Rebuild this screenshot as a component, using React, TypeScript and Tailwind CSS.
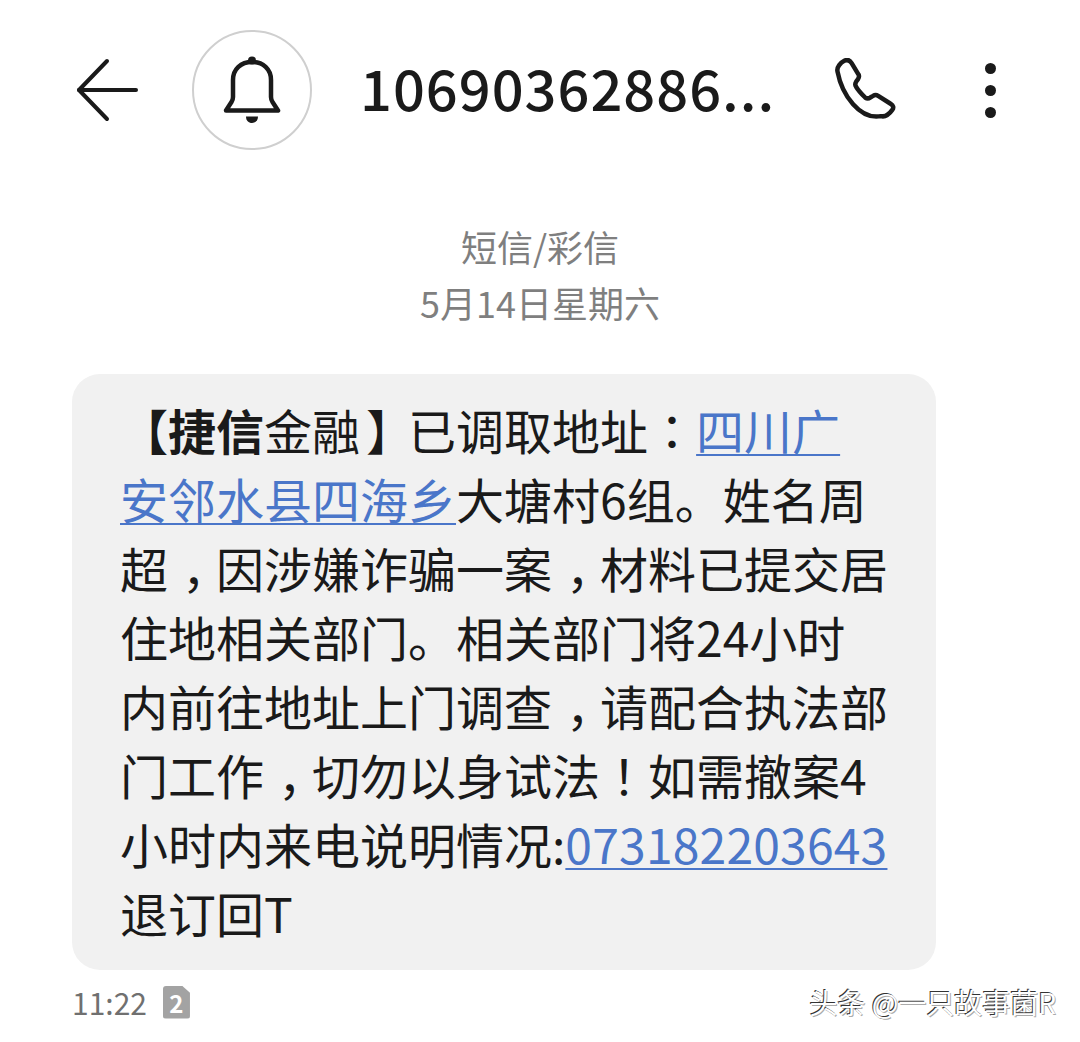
const cjk = "font-['Noto_Sans_CJK_SC','Noto_Sans',sans-serif]";

function BackIcon() {
  return (
    <svg width="64" height="64" viewBox="0 0 64 64" fill="none" stroke="#1a1a1a" strokeWidth="4" strokeLinecap="round" strokeLinejoin="round">
      <path d="M60 32H3" />
      <path d="M31 3 3 32l28 29" />
    </svg>
  );
}

function BellIcon() {
  return (
    <svg width="60" height="68" viewBox="0 0 60 68" fill="none" stroke="#1a1a1a" strokeWidth="4.5" strokeLinejoin="round">
      <path d="M4 54.5 9.5 46c1-1.5 1.5-3 1.5-5V24C11 13 19 6 30 6s19 7 19 18v17c0 2 .5 3.5 1.500 5L56 54.500Z" />
      <circle cx="30" cy="4.500" r="4" fill="#1a1a1a" stroke="none" />
      <path d="M24 60.500h12c0 4-2.500 6.500-6 6.500s-6-2.500-6-6.500Z" fill="#1a1a1a" stroke="none" />
    </svg>
  );
}

function PhoneIcon() {
  return (
    <svg width="70" height="70" viewBox="0 0 62 62" fill="none" stroke="#1a1a1a" strokeWidth="4" strokeLinejoin="round">
      <path d="M4 12c-1-4 3-8 6-9.500 3-1.500 5-.5 6.500 2l6 10c1 1.500.5 3-.5 4.500l-1.500 2c-1 1.500-1 3 0 4.500 2 3.500 4.500 6 8 9.500 1.500 1 3 1 4.500 0l2.500-1.500c1.500-1 3-1 4.500 0l11 7c2.500 1.500 3 3.500 1.500 5.500-2.500 3.500-6 6.500-10 5.500C24 55 8 33 4 12Z" />
    </svg>
  );
}

function Line({ children }: { children: React.ReactNode }) {
  return <div className="h-[69px] leading-[69px] whitespace-nowrap">{children}</div>;
}

function Link({ children }: { children: React.ReactNode }) {
  return <span className="text-[#4a76c9] underline underline-offset-[4px] decoration-2">{children}</span>;
}

// centred full-width punctuation, as on the phone
function P({ children }: { children: React.ReactNode }) {
  return <span className="font-['Noto_Sans_CJK_TC',sans-serif]">{children}</span>;
}

// comma that sits on the baseline but in the middle of its cell
function Comma() {
  return <span className="inline-block pl-[14px] tracking-[-14px]">，</span>;
}

export default function App() {
  return (
    <div className={`w-[1080px] h-[1042px] bg-white overflow-hidden ${cjk}`}>
      {/* Header */}
      <div className="flex items-center h-[120px] mt-[30px] pl-[76px]">
        <BackIcon />
        <div className="ml-[52px] w-[120px] h-[120px] rounded-full border-2 border-[#cfcfcf] flex items-center justify-center">
          <BellIcon />
        </div>
        <div className="ml-[48px] w-[420px] -mt-[6px] text-[56px] font-medium text-[#1a1a1a] tracking-[1px] whitespace-nowrap">
          10690362886...
        </div>
        <div className="ml-[53px] mt-[6px]">
          <PhoneIcon />
        </div>
        <div className="ml-[82px] flex flex-col gap-[11px]">
          <span className="w-[11px] h-[11px] rounded-full bg-[#1a1a1a]" />
          <span className="w-[11px] h-[11px] rounded-full bg-[#1a1a1a]" />
          <span className="w-[11px] h-[11px] rounded-full bg-[#1a1a1a]" />
        </div>
      </div>

      {/* Date */}
      <div className="mt-[68px] text-center text-[#7f7f7f] text-[36px] leading-[56px]">
        <div>短信/彩信</div>
        <div>5月14日星期六</div>
      </div>

      {/* Bubble */}
      <div className="mt-[44px] ml-[72px] w-[864px] h-[596px] rounded-[28px] bg-[#f1f1f1] pl-[48px] pt-[21px] text-[48px] text-[#1a1a1a]">
        <Line>
          <span className="font-bold">
            <P>【</P>捷信
          </span>
          金融<span className="inline-block pl-[6px] tracking-[-6px]">】</span>已调取地址<P>：</P>
          <Link>四川广</Link>
        </Line>
        <Line>
          <Link>安邻水县四海乡</Link>大塘村6组。姓名周
        </Line>
        <Line>
          超<Comma />因涉嫌诈骗一案<Comma />材料已提交居
        </Line>
        <Line>住地相关部门。相关部门将24小时</Line>
        <Line>
          内前往地址上门调查<Comma />请配合执法部
        </Line>
        <Line>
          门工作<Comma />切勿以身试法<P>！</P>如需撤案4
        </Line>
        <Line>
          小时内来电说明情况:
          <span className="tracking-[0.2px]">
            <Link>073182203643</Link>
          </span>
        </Line>
        <Line>退订回T</Line>
      </div>

      {/* Footer */}
      <div className="mt-[12px] pl-[72px] pr-[24px] flex items-center justify-between">
        <div className="flex items-center gap-[16px]">
          <span className="text-[30px] leading-[40px] text-[#707070]">11:22</span>
          <span className="w-[27px] h-[33px] rounded-[3px] bg-[#a3a3a3] text-white text-[24px] leading-[33px] font-bold text-center [clip-path:polygon(0_0,70%_0,100%_22%,100%_100%,0_100%)]">
            2
          </span>
        </div>
        <span className="text-[28px] leading-[40px] text-white [text-shadow:-1px_-1px_0_#333333,1px_1px_0_#aaaaaa]">
          头条 @一只故事菌R
        </span>
      </div>
    </div>
  );
}
